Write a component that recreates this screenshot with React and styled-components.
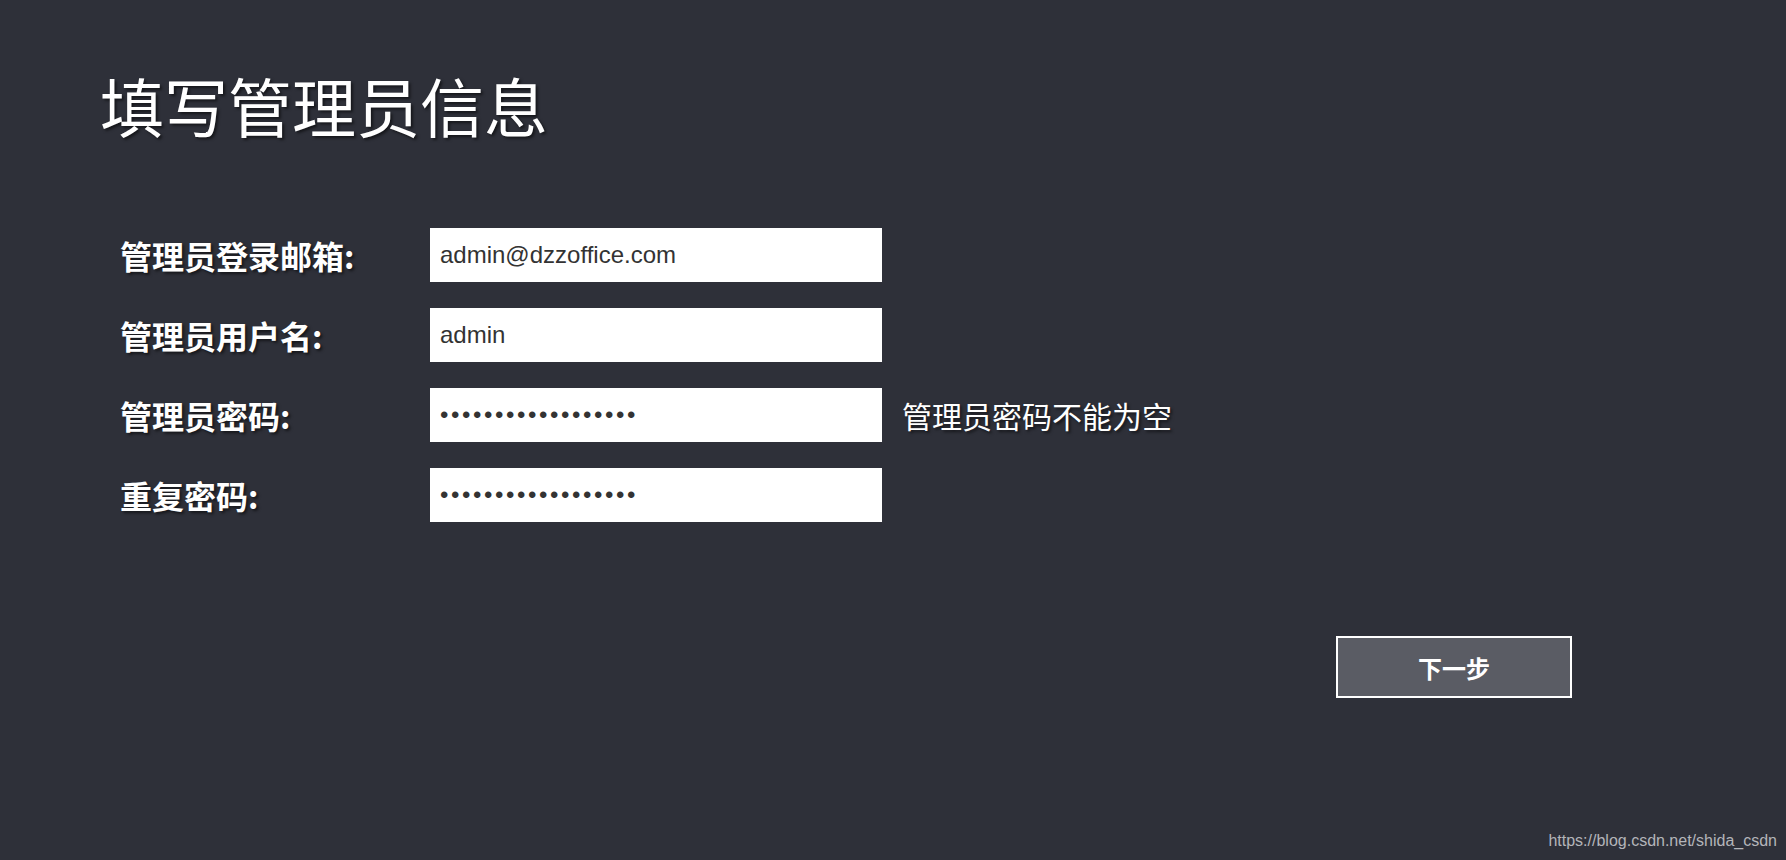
import React from "react";
import styled, { createGlobalStyle } from "styled-components";

const GlobalStyle = createGlobalStyle`
  html, body {
    margin: 0;
    padding: 0;
    background: #2e3039;
  }
  body {
    font-family: "Noto Sans CJK SC", "Noto Sans", sans-serif;
  }
`;

const Page = styled.div`
  position: relative;
  width: 1786px;
  height: 860px;
  background: #2e3039;
  box-sizing: border-box;
  padding-top: 72px;
  overflow: hidden;
`;

const Title = styled.h1`
  margin: 0 0 0 100px;
  font-family: "Noto Sans CJK SC", sans-serif;
  font-size: 64px;
  line-height: 64px;
  font-weight: 400;
  color: #ffffff;
  text-shadow: 2px 2px 3px rgba(0, 0, 0, 0.55);
`;

const Form = styled.form`
  margin: 92px 0 0 120px;
  display: grid;
  grid-template-columns: 310px 452px auto;
  row-gap: 26px;
  align-items: center;
`;

const Label = styled.label`
  font-family: "Noto Sans CJK SC", sans-serif;
  font-size: 32px;
  line-height: 54px;
  font-weight: 700;
  color: #ffffff;
  text-shadow: 2px 2px 3px rgba(0, 0, 0, 0.55);
  white-space: nowrap;
`;

const Input = styled.input`
  box-sizing: border-box;
  width: 452px;
  height: 54px;
  border: none;
  outline: none;
  margin: 0;
  padding: 0 10px;
  background: #ffffff;
  color: #333333;
  font-family: "Liberation Sans", Arial, sans-serif;
  font-size: 24px;
  letter-spacing: ${(p) => (p.$masked ? "2.6px" : "0")};
`;

const Message = styled.span`
  margin-left: 20px;
  font-family: "Noto Sans CJK SC", sans-serif;
  font-size: 30px;
  line-height: 54px;
  font-weight: 400;
  color: #ffffff;
  text-shadow: 2px 2px 3px rgba(0, 0, 0, 0.55);
  white-space: nowrap;
`;

const Actions = styled.div`
  display: flex;
  justify-content: flex-end;
  padding-right: 214px;
  margin-top: 114px;
`;

const NextButton = styled.button`
  box-sizing: border-box;
  width: 236px;
  height: 62px;
  border: 2px solid #ffffff;
  background: #5a5c64;
  color: #ffffff;
  font-family: "Noto Sans CJK SC", sans-serif;
  font-size: 24px;
  font-weight: 700;
  cursor: pointer;
  padding: 0;
`;

const Watermark = styled.div`
  position: absolute;
  right: 9px;
  bottom: 10px;
  font-family: "Liberation Sans", Arial, sans-serif;
  font-size: 16px;
  color: #b4b5b9;
`;

const fields = [
  { label: "管理员登录邮箱:", type: "text", value: "admin@dzzoffice.com" },
  { label: "管理员用户名:", type: "text", value: "admin" },
  {
    label: "管理员密码:",
    type: "password",
    value: "dzzoffice123456789",
    message: "管理员密码不能为空",
  },
  { label: "重复密码:", type: "password", value: "dzzoffice123456789" },
];

export default function App() {
  return (
    <>
      <GlobalStyle />
      <Page>
        <Title>填写管理员信息</Title>
        <Form onSubmit={(e) => e.preventDefault()}>
          {fields.map((f) => (
            <React.Fragment key={f.label}>
              <Label>{f.label}</Label>
              <Input
                type={f.type}
                defaultValue={f.value}
                $masked={f.type === "password"}
              />
              {f.message ? <Message>{f.message}</Message> : <span />}
            </React.Fragment>
          ))}
        </Form>
        <Actions>
          <NextButton type="button">下一步</NextButton>
        </Actions>
        <Watermark>https://blog.csdn.net/shida_csdn</Watermark>
      </Page>
    </>
  );
}
